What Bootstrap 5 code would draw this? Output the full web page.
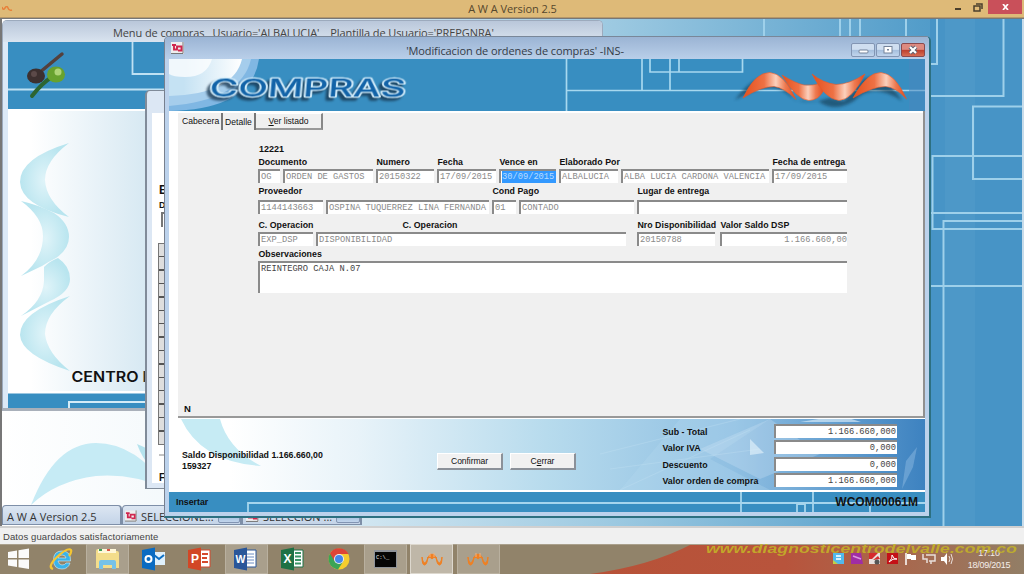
<!DOCTYPE html>
<html lang="es">
<head>
<meta charset="utf-8">
<title>A W A Version 2.5</title>
<meta name="viewport" content="width=device-width, initial-scale=1">
<link href="https://cdn.jsdelivr.net/npm/bootstrap@5.3.0/dist/css/bootstrap.min.css" rel="stylesheet">
<style>
:root{--banner:#388ec1;--face:#f0f0f0}
html,body{height:100%;overflow:hidden}
body{font-family:"Liberation Sans",Arial,sans-serif;font-size:8.8px;line-height:1;color:#111;width:1024px;height:574px;background:#777}
svg{display:block}
.ui-font{font-family:"Open Sans","Noto Sans",sans-serif}
/* application shell */
.app-title{height:18px;background:#deba78;border-bottom:1px solid #b5986a;font-size:11px;color:#55472d}
.app-caption{padding:3px 0 0 73px;letter-spacing:-.05px}
.app-close{width:34px;height:14px;background:#c9505a}
.mdi{height:508px;background:#4693c5;border-left:2px solid #777;border-top:1px solid #777;overflow:hidden}
.app-status{height:18px;background:#f0f0f0;border-top:2px solid #d0d0d0;font-size:9.5px;letter-spacing:.1px;color:#444}
/* child windows */
.win{position:absolute;border-radius:5px 5px 0 0;overflow:hidden}
.win-menu{left:0;top:1px;width:601px;height:391px;background:#dce9f7;border:1px solid #9caabd;border-bottom:3px solid #a9b0ba;padding:0 5px 3px}
.win-menu .win-caption{height:21px;background:linear-gradient(#b9c7da,#d9e3ef);margin:0 -5px;font-size:11px;letter-spacing:-.1px;padding:6px 0 0 110px;color:#444;white-space:pre}
.win-list{left:143px;top:71px;width:60px;height:399px;background:#dce7f4;border:1px solid #808b99;border-width:1px 2px;padding:22px 5px 5px 5px}
.win-list .sheet{background:#fff;height:100%;font-weight:bold;padding:71px 0 0 7px}
.ticks{width:10px;height:202px;background:repeating-linear-gradient(#dedede 0 12px,#555 12px 13.4px);border:1px solid #777}
.win-order{left:162px;top:17px;width:767px;height:482px;background:#bcd2ec;border:1px solid #2d7081;border-top-color:#798799;border-left-color:#77808f;border-bottom-width:2px;border-right-width:2px;padding:0 4px 4px}
.win-order .win-caption{height:22px;background:linear-gradient(#9bb4d4,#b9cfe9);margin:0 -4px;font-size:11px;letter-spacing:-.09px;color:#343b46}
.cap-btn{width:24px;height:14px;border:1px solid #8295b3;border-radius:2px;background:linear-gradient(#cfdef0 45%,#a5bfdd 50%,#c1d5ec)}
.cap-btn.x{background:linear-gradient(#dd8a80 45%,#bd3e2c 50%,#d76d54);border-color:#8b4a4e}
.banner-svg{height:52px}
.logo-word{filter:drop-shadow(-3px 3px 1px rgba(20,50,75,.75))}
.form-area{height:307px;background:var(--face);box-shadow:inset 9px 0 #fff,inset -2px 0 #909090,inset 0 -2px #999,inset 0 2px #fff;padding:2px 2px 2px 9px}
.tab-strip{height:18px;font-size:8.6px}
.tab-it{height:17px;border-right:2px solid #777;padding:4px 4px 0 4px}
.tab-btn{width:67px;height:17px;border-right:2px solid #888;border-bottom:2px solid #999;border-top:1px solid #fff}
.form-body{margin:13px 0 0 80px;width:589px}
.lab{font-weight:bold;height:11px;white-space:nowrap;padding-left:.4px;letter-spacing:.03px}
.fg{display:grid;column-gap:3px}
.r1{grid-template-columns:22px 90px 58px 59px 57px 59px 148px 75px}
.r2{grid-template-columns:65px 163px 24px 115px 210px}
.r3{grid-template-columns:55px 83px 232px 80px 127px}
.inp{height:14px;background:#fff;border:0 solid #8a8a8a;border-width:2px 0 0 2px;font-family:"Liberation Mono",monospace;font-size:8.72px;line-height:13px;color:#8a8a8a;white-space:nowrap;overflow:hidden;padding-left:1px}
.inp.dark{color:#444}
.sel-txt{background:#3399ff;color:#b9dcff;display:block;height:12px;width:54px}
.obs{height:32px}
.foot-area{position:relative;height:74px;border-top:1px solid #fff;border-bottom:2px solid #fff}
.foot-bg{position:absolute;inset:0}
.foot-content{position:relative;padding:0 0 0 13px}
.push{width:66px;height:17px;background:#f1f1f1;border-right:2px solid #8b9199;border-bottom:2px solid #8b9199;border-top:1px solid #fff;border-left:1px solid #fff;font-size:8.6px;letter-spacing:-.1px}
.totals{display:grid;grid-template-columns:112px 123px;row-gap:2.4px}
.totals .inp{text-align:right;padding-right:1px}
.order-status{position:relative;height:20px;background:var(--banner);font-weight:bold}
.order-status svg{position:absolute;inset:0}
.code{font-size:12px;position:relative}
/* minimised children */
.mini-row{position:absolute;left:0;top:486px;font-size:11px}
.mini{width:120px;height:20px;border:1px solid #7e8fa8;border-right-width:2px;background:linear-gradient(#dce6f2,#c4d4e8);border-radius:4px 4px 0 0;padding:2px 0 0 4px;color:#333}
/* taskbar */
.taskbar{position:relative;height:30px;background:#91836a;overflow:hidden}
.taskbar .bg{position:absolute;inset:0}
.cells{position:relative;margin-left:-8.5px;height:30px}
.cell{width:46.35px;height:30px;display:flex;align-items:center;justify-content:center}
.cell:first-child{padding-left:8px}
.cell .tile{width:43px;height:30px;background:#a99f8c;border:1px solid #b9b09f;display:flex;align-items:center;justify-content:center}
.cell .tile.hot{background:#bfb7a8;border-color:#ddd8ce}
.clock{font-size:9px;line-height:12px;letter-spacing:-.25px;color:#f5eeea;width:56px;text-align:center}
.site-mark{position:absolute;left:700px;top:539px}
</style>
</head>
<body class="position-relative">
<svg width="0" height="0" class="position-absolute">
 <defs>
  <linearGradient id="fl" x1="0" y1="0" x2="1" y2="0"><stop offset="0" stop-color="#e4501d"/><stop offset=".4" stop-color="#ee7144"/><stop offset=".62" stop-color="#fbd0bc"/><stop offset=".8" stop-color="#ee7a50"/><stop offset="1" stop-color="#e2481a"/></linearGradient>
  <linearGradient id="bgd" x1="0" y1="0" x2="1" y2="0"><stop offset="0" stop-color="#fff"/><stop offset=".2" stop-color="#f2f8fb"/><stop offset=".6" stop-color="#9cc9e1"/><stop offset=".9" stop-color="#539dca"/><stop offset="1" stop-color="#428fc3"/></linearGradient>
  <symbol id="doc" viewBox="0 0 13 12"><path d="M0 0h13v12H0z" fill="#eee"/><path d="M12 0v11.500H0" fill="none" stroke="#777"/><path d="M1 3h4M3 3v4.500h3V4.500h4.500v4H7" fill="none" stroke="#d0264e" stroke-width="1.900"/></symbol>
  <symbol id="awa" viewBox="0 0 22 14"><path d="M1 5q1 7 3.500 5.500Q6 9 7 5q-1 8-3.500 8Q1 13 1 5zM7 6q2-5 4-3.500Q13 1 15 6q-2-2-4 1-2-3-4-1zM21 5q-1 7-3.500 5.500Q16 9 15 5q1 8 3.500 8Q21 13 21 5z" fill="#f08022" stroke="#f08022"/><path d="M9 1v4M13 1v4" stroke="#f6b17a"/></symbol>
 </defs>
</svg>

<header class="app-title ui-font d-flex position-relative">
 <svg class="position-absolute" style="left:2px;top:6px" width="11" height="6"><path d="M0 1q1 4 3 1t3 0 4 2" fill="none" stroke="#e8803a" stroke-width="1.500"/></svg>
 <div class="flex-grow-1 text-center app-caption">A W A Version 2.5</div>
 <svg width="36" height="16"><path d="M3 8h6v2H3z" fill="#4a3f2c"/><path d="M24 4h6v5M22 6h6v5h-6z" fill="none" stroke="#4a3f2c" stroke-width="1.500"/></svg>
 <div class="app-close d-flex justify-content-center align-items-center"><svg width="7" height="6"><path d="M1 0l5 6M6 0L1 6" stroke="#fff" stroke-width="1.700"/></svg></div>
 <div style="width:2px"></div>
</header>

<main class="mdi position-relative">
 <svg class="position-absolute" style="left:-2px;top:0" width="1024" height="508" viewBox="0 19 1024 508">
  <path d="M0 19h1024v508H0z" fill="url(#bgd)"/>
  <path d="M930 19h94v508h-94z" fill="#4794c6"/><path d="M945 19h30v508h-30z" fill="#539cca" opacity=".5"/>
  <path d="M31 505Q55 443 96 443q40 0 72 46-36-16-72-13-40 5-65 29z" fill="#c6ebf5"/>
  <path d="M137 444q10 28 40 45l-6-30z" fill="#b5e3ee"/>
  <g fill="none" stroke="#9ed0ea" stroke-width="2"><path d="M764 19v18M840 19v18M850 19v18M860 19v18M906 19v18M937 19v45h-9M1003.500 19v77H928M1024 106.500h-51v72.500h51M1024 156H932.500v73H1024M930 213h94M1024 221h-80.500v306M930 286h94"/></g>
  <path d="M1022 19h2v508h-2z" fill="#c8dcea"/>
 </svg>

 <section class="win win-menu">
  <div class="win-caption ui-font">Menu de compras   Usuario='ALBALUCIA'    Plantilla de Usuario='PREPGNRA'</div>
  <svg width="590" height="367" viewBox="8 41 590 367">
   <defs><linearGradient id="side" x1="8" y1="0" x2="160" y2="0" gradientUnits="userSpaceOnUse"><stop offset=".15" stop-color="#fff"/><stop offset="1" stop-color="#d2e6f1"/></linearGradient>
   <radialGradient id="pale"><stop offset="0" stop-color="#e0f4f9"/><stop offset="1" stop-color="#b9e5ef"/></radialGradient></defs>
   <path d="M8 41h590v367H8z" fill="#fff"/><path d="M8 41h590v67H8z" fill="#388ec1"/>
   <path d="M8 110h590v280H8z" fill="url(#side)"/>
   <path d="M8 88.500h590M132.500 41v32H598" fill="none" stroke="#bfe1f3" stroke-width="1.800"/>
   <path d="M8 392.500h590V408H8z" fill="#388ec1"/><path d="M69 408v-7h529" fill="none" stroke="#d5ecf7" stroke-width="2"/>
   <path d="M39 72L62 53" stroke="#54403c" stroke-width="3.500" stroke-linecap="round"/><ellipse cx="36" cy="75" rx="9" ry="7.500" fill="#3d302f"/><circle cx="34" cy="73" r="3" fill="#5c4a49"/>
   <path d="M52 76Q42 82 32 95" stroke="#2c6532" stroke-width="4" stroke-linecap="round" fill="none"/><ellipse cx="56" cy="73.500" rx="9" ry="8" fill="#68a22e"/><circle cx="58" cy="71" r="3.500" fill="#aed476"/>
   <path d="M69 142Q20 157 20 181q1 23 49 35-23-17-24-37 0-19 24-37z" fill="url(#pale)"/>
   <path d="M21 200q18 4 33 12 15 10 15 24 0 12-13 21-8 4-14 8l-21 10q22-16 22-40 0-19-22-35z" fill="url(#pale)"/>
   <path d="M44 266q6-6 14-9 12 8 12 21 0 13-20 22l-29 15q22-15 23-35z" fill="url(#pale)"/>
   <path d="M70 295Q20 311 20 334q1 20 50 36-23-18-25-37 0-20 25-38z" fill="url(#pale)"/>
   <text x="71.500" y="380.500" font-family="Inter,sans-serif" font-weight="600" font-size="14.500" fill="#111" textLength="67" lengthAdjust="spacingAndGlyphs">CENTRO</text><text x="142.500" y="380.500" font-family="Inter,sans-serif" font-weight="600" font-size="14.500" fill="#333">D</text>
  </svg>
 </section>

 <section class="win win-list">
  <div class="sheet d-flex flex-column">
   <div style="font-size:12px">E</div><div style="margin-top:5px">D</div>
   <svg style="margin-top:2px" width="10" height="16"><path d="M3 15V1h7" fill="none" stroke="#777" stroke-width="2"/></svg>
   <div style="margin:15px 0 0 -1px" class="ticks flex-shrink-0"></div>
   <svg style="margin-top:9px" class="flex-shrink-0" width="10" height="3"><path d="M0 1h10" stroke="#888"/></svg>
   <div style="margin-top:16px;font-size:10px">F</div>
  </div>
 </section>

 <div class="mini-row d-flex ui-font">
  <div class="mini d-flex align-items-center text-nowrap">A W A Version 2.5</div>
  <div class="mini d-flex align-items-center text-nowrap gap-1" style="padding-left:2px"><svg width="13" height="12"><use href="#doc"/></svg>SELECCIONE... <span class="cap-btn"></span></div>
  <div class="mini d-flex align-items-center text-nowrap gap-1" style="padding-left:3px"><svg width="13" height="12"><use href="#doc"/></svg>SELECCION ... <span class="cap-btn"></span></div>
 </div>

 <section class="win win-order">
  <div class="win-caption ui-font d-flex align-items-center">
   <svg style="margin-left:6px" width="13" height="12"><use href="#doc"/></svg>
   <div class="flex-grow-1 text-center text-nowrap pt-1" style="padding-right:5px">'Modificacion de ordenes de compras' -INS-</div>
   <div class="d-flex" style="gap:1px;margin:3px 4px 0 0">
    <span class="cap-btn"><svg width="22" height="12"><rect x="7" y="6" width="9" height="3" rx="1" fill="#fff" stroke="#74839a"/></svg></span>
    <span class="cap-btn"><svg width="22" height="12"><rect x="7" y="2.500" width="8" height="6.500" fill="#fff" stroke="#74839a"/><path d="M10 5h2v1.500h-2z" fill="#74839a"/></svg></span>
    <span class="cap-btn x"><svg width="22" height="12"><path d="M8 3l6 6M14 3L8 9" stroke="#5b6070" stroke-width="4"/><path d="M8 3l6 6M14 3L8 9" stroke="#fff" stroke-width="2.200"/></svg></span>
   </div>
  </div>

  <svg class="banner-svg" width="756" height="52" viewBox="169 59 756 52">
   <defs><linearGradient id="glow" x1="0" y1="0" x2="1" y2="0"><stop offset=".2" stop-color="#c5e2f3"/><stop offset="1" stop-color="#fff"/></linearGradient><filter id="sh" x="-20%" y="-30%" width="140%" height="180%"><feGaussianBlur stdDeviation="1.600"/></filter></defs>
   <path d="M169 59h756v52H169z" fill="#388ec1"/>
   <path d="M169 59h90q-7 50-90 52z" fill="#80b7e3"/><path d="M169 59h82q-9 41-82 47z" fill="#a5cdec"/>
   <path d="M169 59h73q-8 35-73 37z" fill="url(#glow)"/><path d="M169 59h43q-5 18-27 18-12 0-16-3z" fill="#fff" opacity=".75"/>
   <g fill="none" stroke="#a7d8ef" stroke-width="1.700"><path d="M566.500 59v52M566 90.500H925M650 59v13h92.500V59M642 59v31M670 59v31M679 59v13"/></g>
   <path d="M909 59h16v52h-16z" fill="#4a85be" opacity=".5"/>
   <text class="logo-word" transform="translate(209 96.500) skewX(-5)" font-family="Inter,sans-serif" font-size="23.500" font-weight="500" fill="#1263a8" stroke="#d2ecfa" stroke-width="2.400" stroke-linejoin="round" paint-order="stroke" textLength="196" lengthAdjust="spacingAndGlyphs">COMPRAS</text>
   <path d="M735 100q20-28 40-22l20 22 20 2 14-4 15 3 20-22q20-8 38 22-30-20-48 0-20 12-36 0-20 4-32-8-15-14-51 7z" fill="#143f59" opacity=".65" filter="url(#sh)"/>
   <g fill="url(#fl)" stroke="#e35a2c" stroke-width=".6">
    <path d="M743 98q12-26 27-25.500 14 1 26 27-12-12-22-13-13 0-31 11.500z"/>
    <path d="M782 75q13 8 22 10 9 1 17-2l3 7q-5 10-15 10.500-13-1-27-25.500z"/>
    <path d="M812 74q11 9 24 10.500 13 0 29-10.500-13 26-26 26.500-14-1-27-26.500z"/>
    <path d="M853 98q14-26 28-25.500 14 1 25.500 26.500-11-12-21-12.500-13 0-32.500 11.500z"/>
   </g>
  </svg>

  <div class="form-area">
   <div class="tab-strip d-flex">
    <div class="tab-it text-center" style="width:45px">Cabecera</div>
    <div class="tab-it text-center" style="width:33px;padding:5px 0 0">Detalle</div>
    <div class="tab-btn d-flex align-items-center justify-content-center"><span><u>V</u>er listado</span></div>
   </div>
   <div class="form-body">
    <div class="fw-bold" style="font-size:9px;height:14px;padding:1px 0 0 1px">12221</div>
    <div class="fg r1">
     <div class="lab" style="grid-column:span 2">Documento</div><div class="lab">Numero</div><div class="lab">Fecha</div><div class="lab">Vence en</div><div class="lab" style="grid-column:span 2">Elaborado Por</div><div class="lab">Fecha de entrega</div>
     <div class="inp">OG</div><div class="inp">ORDEN DE GASTOS</div><div class="inp">20150322</div><div class="inp">17/09/2015</div><div class="inp"><span class="sel-txt">30/09/2015</span></div><div class="inp">ALBALUCIA</div><div class="inp">ALBA LUCIA CARDONA VALENCIA</div><div class="inp">17/09/2015</div>
    </div>
    <div class="fg r2" style="margin-top:4px;row-gap:2px">
     <div class="lab" style="grid-column:span 2">Proveedor</div><div class="lab" style="grid-column:span 2">Cond Pago</div><div class="lab">Lugar de entrega</div>
     <div class="inp">1144143663</div><div class="inp">OSPINA TUQUERREZ LINA FERNANDA</div><div class="inp">01</div><div class="inp">CONTADO</div><div class="inp"></div>
    </div>
    <div class="fg r3" style="margin-top:7px">
     <div class="lab" style="grid-column:span 2">C. Operacion</div><div class="lab">C. Operacion</div><div class="lab">Nro Disponibilidad</div><div class="lab">Valor Saldo DSP</div>
     <div class="inp">EXP_DSP</div><div class="inp" style="grid-column:span 2;margin-right:8px">DISPONIBILIDAD</div><div class="inp" style="margin-right:2px">20150788</div><div class="inp text-end">1.166.660,00</div>
    </div>
    <div class="lab" style="margin-top:4px">Observaciones</div>
    <div class="inp dark obs">REINTEGRO CAJA N.07</div>
   </div>
   <div class="fw-bold" style="margin:111px 0 0 6px;font-size:9.500px">N</div>
  </div>

  <div class="foot-area">
   <svg class="foot-bg" width="756" height="71" preserveAspectRatio="none" viewBox="169 420 756 71">
    <defs><linearGradient id="ft" x1="0" y1="0" x2="1" y2="0"><stop offset=".08" stop-color="#fff"/><stop offset=".25" stop-color="#e8f3f9"/><stop offset=".5" stop-color="#b7dbed"/><stop offset=".75" stop-color="#8fbfe2"/><stop offset="1" stop-color="#3d82c0"/></linearGradient></defs>
    <path d="M169 420h756v71H169z" fill="url(#ft)"/>
    <path d="M181 420h39q8 30 41 47-60-4-80-47z" fill="#c6ebf4"/>
    <path d="M620 491l60-71h90l-60 40 60 31z" fill="#b8dcf1" opacity=".28"/><path d="M700 450l70-30 50 35-60 25z" fill="#cfe6f5" opacity=".3"/>
    <path d="M600 455l140-35M610 470l150-20M620 491l130-60" stroke="#c8e4f4" opacity=".3"/>
    <path d="M800 423l25-4 20-1 16 5zM750 440l14 14-14 2z" fill="#e8f5fb" opacity=".6"/><path d="M902 490l4-28 11-14-4 20z" fill="#9dc6e8" opacity=".4"/>
   </svg>
   <div class="foot-content d-flex">
    <div class="fw-bold" style="width:255px;padding-top:31px;line-height:11px;font-size:8.800px">Saldo Disponibilidad 1.166.660,00<br>159327</div>
    <div class="d-flex" style="gap:7px;padding-top:34px;width:224px">
     <div class="push d-flex align-items-center justify-content-center">Confirmar</div>
     <div class="push d-flex align-items-center justify-content-center"><span>C<u>e</u>rrar</span></div>
    </div>
    <div class="totals" style="padding-top:5px;margin-left:1px">
     <div class="lab pt-1">Sub - Total</div><div class="inp dark">1.166.660,000</div>
     <div class="lab pt-1">Valor IVA</div><div class="inp dark">0,000</div>
     <div class="lab pt-1">Descuento</div><div class="inp dark">0,000</div>
     <div class="lab pt-1">Valor orden de compra</div><div class="inp dark">1.166.660,000</div>
    </div>
   </div>
  </div>
  <div class="order-status d-flex align-items-center justify-content-between">
   <svg width="756" height="20" viewBox="169 493 756 20"><path d="M248 513v-9h677M741 493v20M813 493v20M797 513v-8h8v8M870 504v9" fill="none" stroke="#a5d5ed" stroke-width="1.800"/></svg>
   <span class="position-relative" style="margin-left:7px">Insertar</span>
   <span class="code" style="margin-right:7px">WCOM00061M</span>
  </div>
 </section>
</main>

<div class="app-status d-flex align-items-center" style="padding:1px 0 0 3px">Datos guardados satisfactoriamente</div>

<footer class="taskbar">
 <svg class="bg" width="1024" height="30"><defs><linearGradient id="tb" x1="590" x2="1024" y1="0" y2="0" gradientUnits="userSpaceOnUse"><stop offset="0" stop-color="#b75238"/><stop offset=".45" stop-color="#b8543c"/><stop offset=".75" stop-color="#a66a50"/><stop offset="1" stop-color="#927e66"/></linearGradient></defs><path d="M590 30Q650 22 692 0h332v30z" fill="url(#tb)"/><path d="M0 .5h1024" stroke="#aaa08c"/></svg>
 <div class="cells d-flex">
  <div class="cell"><svg width="22" height="22"><path d="M0 4l9-1.500V10H0zM10.500 2.200L21 .5V10H10.500zM0 11.500h9V19l-9-1.500zM10.500 11.500H21v9.500l-10.500-1.700z" fill="#fafafa"/></svg></div>
  <div class="cell"><svg width="24" height="24"><path d="M21.500 14H9q1 4 4 4 3 0 4-2h4q-2 6-8 6-8.500 0-8.500-9t8.500-9q9 0 8.500 10zM9 11h8q-.5-3-4-3t-4 3z" fill="#39b3ea" stroke="#d6f0fb" stroke-width=".6"/><path d="M4 22Q-2 20 8 10 19 0 22 3q1 2-2 6" fill="none" stroke="#f5c632" stroke-width="2.200"/></svg></div>
  <div class="cell"><div class="tile"><svg width="25" height="24"><path d="M1 4q0-2 2-2h6l2 2h11q2 0 2 2v15H1z" fill="#f3dd8b"/><path d="M3 2h18v4H3z" fill="#fff7d8"/><path d="M4 3h3" stroke="#3c9f55" stroke-width="2"/><path d="M12 3h3" stroke="#dd5544" stroke-width="2"/><path d="M4 22v-7q0-2 2-2h13q2 0 2 2v7h-4v-4H8v4z" fill="#76c2e8"/></svg></div></div>
  <div class="cell"><svg width="24" height="24"><path d="M10 5h13v13H10z" fill="#dff0fc"/><path d="M12 8l5 4 5-4" stroke="#0d6fc4" stroke-width="2" fill="none"/><path d="M0 3l13-2.500v23L0 21z" fill="#0a6bc2"/><circle cx="6.500" cy="12" r="3" fill="none" stroke="#fff" stroke-width="2"/></svg></div>
  <div class="cell"><svg width="24" height="24"><path d="M10 3h12v17H10z" fill="#fff" stroke="#d5492c"/><path d="M14 7h6M14 11h5M14 15h6" stroke="#d5492c" stroke-width="2"/><path d="M0 3l13-2.500v23L0 21z" fill="#d24726"/><text x="3" y="16" font-size="12" font-weight="bold" fill="#fff">P</text></svg></div>
  <div class="cell"><div class="tile"><svg width="24" height="24"><path d="M10 3h12v17H10z" fill="#fff" stroke="#2a5699"/><path d="M13 7h7M13 10h7M13 13h7M13 16h7" stroke="#6b8cc2"/><path d="M0 3l13-2.500v23L0 21z" fill="#2a5699"/><text x="1.500" y="16" font-size="10.500" font-weight="bold" fill="#fff">W</text></svg></div></div>
  <div class="cell"><svg width="24" height="24"><path d="M10 3h12v17H10z" fill="#fff" stroke="#1f7246"/><path d="M14 6h6M14 9.500h6M14 13h6M14 16.500h6" stroke="#3b9566" stroke-width="1.800"/><path d="M0 3l13-2.500v23L0 21z" fill="#1e7145"/><text x="2.500" y="16" font-size="12" font-weight="bold" fill="#fff">X</text></svg></div>
  <div class="cell"><svg width="22" height="22"><circle cx="11" cy="11" r="10.500" fill="#f6cd2e"/><path d="M11 11L2 5.500A10.500 10.500 0 0 0 10 21.400L15.500 13z" fill="#3ca456"/><path d="M11 6h9.500A10.500 10.500 0 0 0 2 5.500L6.500 13z" fill="#dd4537"/><circle cx="11" cy="11" r="5" fill="#eee"/><circle cx="11" cy="11" r="4" fill="#4587ea"/></svg></div>
  <div class="cell"><div class="tile"><svg width="23" height="18"><path d="M0 0h23v18H0z" fill="#8f9399"/><path d="M1 2h21v15H1z" fill="#060606"/><text x="2" y="8.500" font-size="5.500" font-family="Liberation Mono,monospace" fill="#eee">C:\_</text></svg></div></div>
  <div class="cell"><div class="tile hot"><svg width="22" height="14"><use href="#awa"/></svg></div></div>
  <div class="cell"><div class="tile"><svg width="22" height="14"><use href="#awa"/></svg></div></div>
  <div class="ms-auto d-flex align-items-center" style="padding-right:7px">
   <svg width="122" height="14" style="margin-right:7px"><path d="M1 1h11v11H1z" fill="#52b9ec"/><path d="M1 8v4h5z" fill="#bfd04a"/><path d="M4 4h5M4 7h5" stroke="#d9f2fc" stroke-width="2"/>
    <path d="M19 1h10l2 11H19z" fill="#a02da5"/><path d="M21 4l8 3" stroke="#dc9adf" stroke-width="1.500"/>
    <path d="M37 1h11v11H37z" fill="#e8e0de"/><path d="M37 1h9l-6 6h-3zM41 8l5-4 2 3z" fill="#d52a2e"/><circle cx="45" cy="10" r="2.500" fill="#555"/>
    <path d="M55 1h11v11H55z" fill="#c41016"/><path d="M57 10q4-4 3-7 2 5 5 4-4-1-8 3z" fill="none" stroke="#fff"/>
    <path d="M74 1v12" stroke="#fff" stroke-width="1.500"/><path d="M75 2h4v1h5v5h-5V7h-4z" fill="#fff"/>
    <path d="M94 3h9v6h-6M91 2v5h4v4M99 9v3" fill="none" stroke="#e9dfda" stroke-width="1.500"/>
    <path d="M109 5h3l3-4v12l-3-4h-3z" fill="#fff"/><path d="M117 4q2 3 0 6M119 2q3 5 0 10" fill="none" stroke="#eadfda"/></svg>
   <div class="clock">17:10<br>18/09/2015</div>
  </div>
 </div>
</footer>
<svg class="site-mark" width="324" height="20"><text x="6" y="13.500" font-family="Liberation Sans,Arial,sans-serif" font-size="12" font-weight="bold" font-style="italic" fill="#c4b528" opacity=".85" textLength="311" lengthAdjust="spacingAndGlyphs">www.diagnosticentrodelvalle.com.co</text></svg>
<script src="https://cdn.jsdelivr.net/npm/bootstrap@5.3.0/dist/js/bootstrap.bundle.min.js"></script>
</body>
</html>
